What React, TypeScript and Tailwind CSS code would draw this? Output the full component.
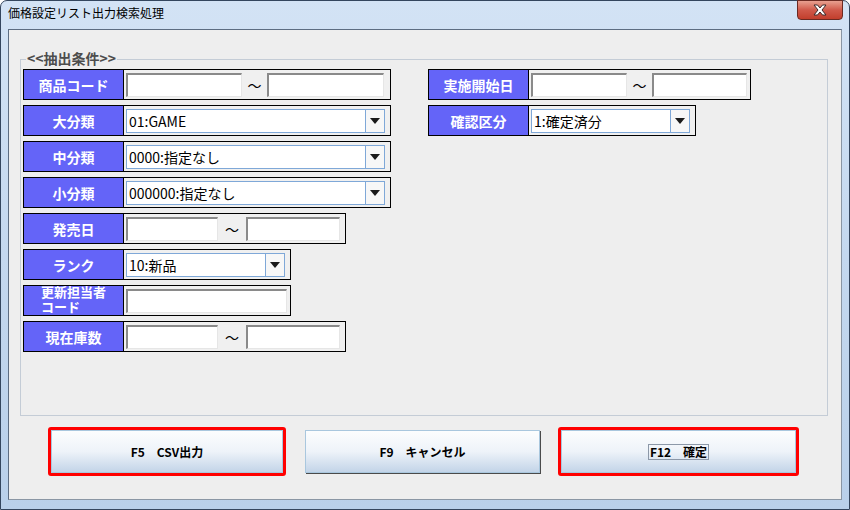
import React from "react";

const FONT = { fontFamily: '"MS UI Gothic", "Noto Sans CJK JP", "Noto Sans", sans-serif' };

function Label({ children }: { children: React.ReactNode }) {
  return (
    <div className="w-[100px] h-full shrink-0 bg-[#6464f8] border-r border-black flex items-center justify-center text-white font-bold text-[14px] leading-none">
      {children}
    </div>
  );
}

function TextBox({ w }: { w: string }) {
  return (
    <div
      className={`${w} h-[24px] bg-white border-t-2 border-l-2 border-b border-r border-t-[#8a8a8a] border-l-[#8a8a8a] border-b-[#e6e6e6] border-r-[#e6e6e6]`}
    />
  );
}

function Tilde({ w }: { w: string }) {
  return <div className={`${w} h-[24px] flex items-center justify-center text-[14px] text-black`}>～</div>;
}

function Combo({ w, value }: { w: string; value: string }) {
  return (
    <div className={`${w} h-[24px] flex bg-white border border-[#7fa8d8]`}>
      <div className="flex-1 flex items-center pl-[2px] text-[14px] text-black whitespace-nowrap overflow-hidden">{value}</div>
      <div className="w-[19px] h-full border-l border-[#7fa8d8] bg-[#f7f7f7] flex items-center justify-center">
        <svg width="10" height="6" viewBox="0 0 10 6">
          <path d="M0 0 H10 L5 6 Z" fill="#1a1a1a" />
        </svg>
      </div>
    </div>
  );
}

function Row({ w, label, children }: { w: string; label: React.ReactNode; children: React.ReactNode }) {
  return (
    <div className={`${w} h-[31px] flex border border-black bg-[#f0f0f0]`}>
      <Label>{label}</Label>
      <div className="flex-1 flex items-center pl-[2px] pt-[1px]">{children}</div>
    </div>
  );
}

function Btn({ children, w }: { children: React.ReactNode; w: string }) {
  return (
    <div
      className={`${w} h-full flex items-center justify-center bg-gradient-to-b from-[#fcfdfe] via-[#eef3f9] to-[#c3d4e8] border border-[#a9c7de] text-[12px] font-bold text-black whitespace-pre`}
    >
      {children}
    </div>
  );
}

export default function App() {
  return (
    <div className="w-[850px] h-[510px] overflow-hidden" style={FONT}>
      <div className="w-[850px] h-[510px] flex flex-col border border-[#34465e] rounded-t-[7px] bg-gradient-to-b from-[#d3e3f5] via-[#c4d8ef] to-[#b9d0ea]">
        {/* title bar */}
        <div className="h-[28px] shrink-0 flex items-start justify-between">
          <div className="pl-[7px] pt-[6px] text-[12px] leading-none text-black">価格設定リスト出力検索処理</div>
          <div className="mr-[6px] mt-[-1px] w-[46px] h-[20px] rounded-b-[4px] border border-[#6b2a22] bg-gradient-to-b from-[#e8a090] via-[#d0594a] to-[#c23e2c] flex items-center justify-center">
            <svg width="14" height="12" viewBox="0 0 14 12">
              <path d="M1 1 H4.5 L7 4 L9.5 1 H13 L9 6 L13 11 H9.5 L7 8 L4.5 11 H1 L5 6 Z" fill="#ffffff" stroke="#3a2a2a" strokeWidth="1" />
            </svg>
          </div>
        </div>
        {/* client area */}
        <div className="mx-[7px] w-[834px] h-[471px] border border-t-[#5d6d82] border-l-[#5d6d82] border-r-[#8a96a4] border-b-[#8a96a4] bg-[#eeeeee] flex flex-col">
          {/* fieldset */}
          <div className="relative ml-[11px] mt-[29px] w-[808px] h-[357px] border border-[#c4ccd6] pl-[2px] pt-[9px] flex">
            <div className="absolute left-[5px] top-[-9px] px-[1px] bg-[#eeeeee] text-[14px] font-bold leading-none text-[#4d4d4d]">
              &lt;&lt;抽出条件&gt;&gt;
            </div>
            <div className="w-[405px] flex flex-col gap-[5px]">
              <Row w="w-[368px]" label="商品コード">
                <TextBox w="w-[116px]" />
                <Tilde w="w-[25px]" />
                <TextBox w="w-[117px]" />
              </Row>
              <Row w="w-[368px]" label="大分類">
                <Combo w="w-[259px]" value="01:GAME" />
              </Row>
              <Row w="w-[368px]" label="中分類">
                <Combo w="w-[259px]" value="0000:指定なし" />
              </Row>
              <Row w="w-[368px]" label="小分類">
                <Combo w="w-[259px]" value="000000:指定なし" />
              </Row>
              <Row w="w-[323px]" label="発売日">
                <TextBox w="w-[92px]" />
                <Tilde w="w-[28px]" />
                <TextBox w="w-[94px]" />
              </Row>
              <Row w="w-[268px]" label="ランク">
                <Combo w="w-[159px]" value="10:新品" />
              </Row>
              <Row
                w="w-[268px]"
                label={
                  <div className="flex flex-col text-left text-[13px] leading-[15px] mt-[-3px]">
                    <span className="leading-[15px]">更新担当者</span>
                    <span className="leading-[15px]">コード</span>
                  </div>
                }
              >
                <TextBox w="w-[161px]" />
              </Row>
              <Row w="w-[323px]" label="現在庫数">
                <TextBox w="w-[92px]" />
                <Tilde w="w-[28px]" />
                <TextBox w="w-[94px]" />
              </Row>
            </div>
            <div className="flex flex-col gap-[5px]">
              <Row w="w-[323px]" label="実施開始日">
                <TextBox w="w-[96px]" />
                <Tilde w="w-[25px]" />
                <TextBox w="w-[95px]" />
              </Row>
              <Row w="w-[268px]" label="確認区分">
                <Combo w="w-[159px]" value="1:確定済分" />
              </Row>
            </div>
          </div>
          {/* buttons */}
          <div className="ml-[39px] mt-[11px] h-[49px] flex items-center">
            <div className="w-[238px] h-[49px] border-[3px] border-[#ff0000] rounded-[3px]">
              <Btn w="w-full">{"F5　CSV出力"}</Btn>
            </div>
            <div className="ml-[19px] w-[235px] h-[43px] shadow-[1px_1px_0_#4a4a4a]">
              <Btn w="w-full">{"F9　キャンセル"}</Btn>
            </div>
            <div className="ml-[18px] w-[241px] h-[49px] border-[3px] border-[#ff0000] rounded-[3px]">
              <Btn w="w-full">
                <span className="border border-[#8c98a8] px-[1px] py-[1px] leading-none">{"F12　確定"}</span>
              </Btn>
            </div>
          </div>
        </div>
      </div>
    </div>
  );
}
